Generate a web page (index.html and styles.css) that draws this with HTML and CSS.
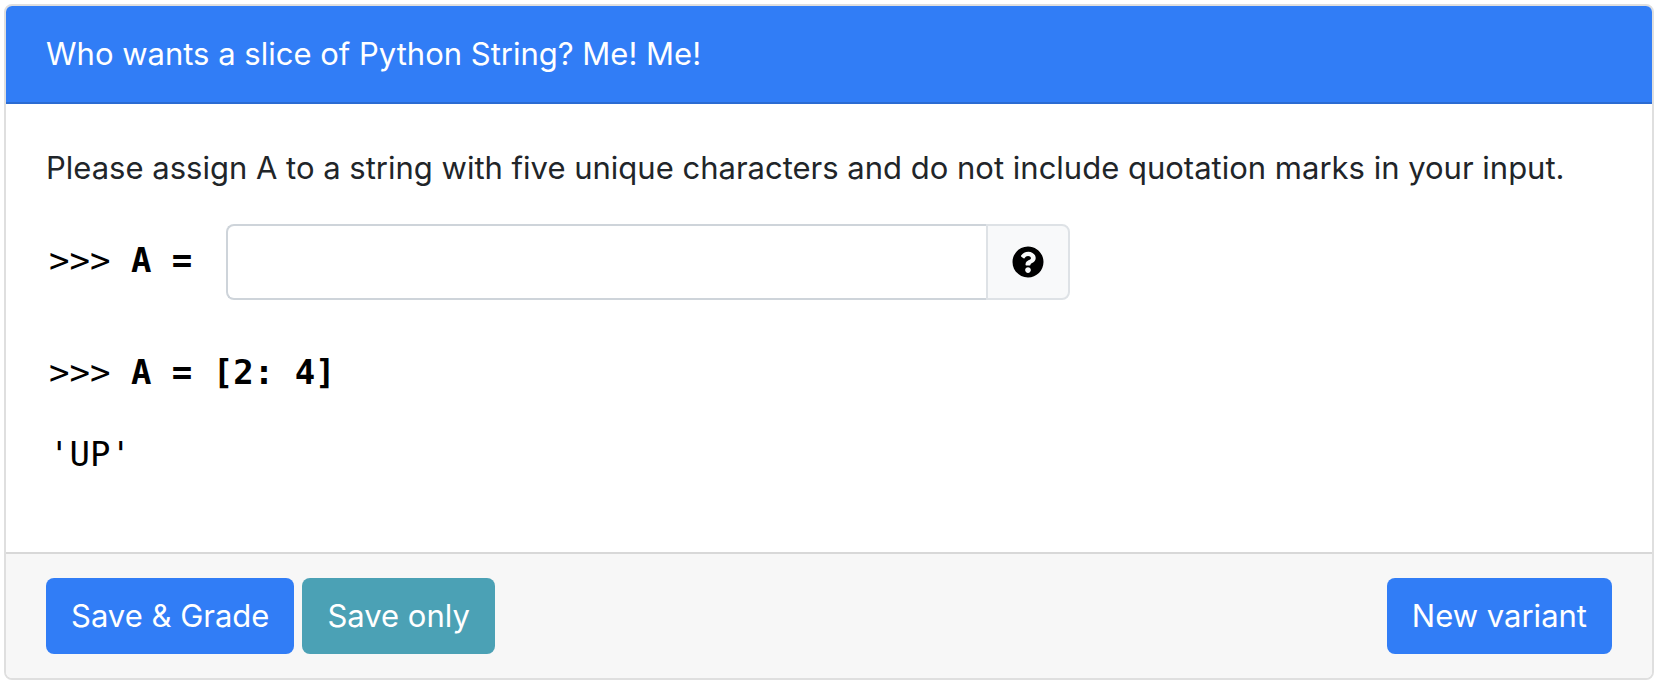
FILE: index.html
```html
<!DOCTYPE html>
<html lang="en">
<head>
<meta charset="utf-8">
<meta name="viewport" content="width=device-width, initial-scale=1">
<title>Who wants a slice of Python String?</title>
<link rel="stylesheet" href="styles.css">
</head>
<body>
<form class="card">
  <header class="card-header"><h1 class="title">Who wants a slice of Python String? Me! Me!</h1></header>
  <main class="card-body">
    <p class="prompt">Please assign A to a string with five unique characters and do not include quotation marks in your input.</p>
    <div class="answer">
      <label class="code answer-label" for="answer-a">&gt;&gt;&gt; <b>A =</b></label>
      <div class="input-group">
        <input class="input" id="answer-a" type="text" autocomplete="off">
        <button class="help" type="button" aria-label="Help">
          <svg class="help-icon" viewBox="0 0 512 512" aria-hidden="true"><path fill="currentColor" d="M504 256c0 136.997-111.043 248-248 248S8 392.997 8 256C8 119.083 119.043 8 256 8s248 111.083 248 248zM262.655 90c-54.497 0-89.255 22.957-116.549 63.758-3.536 5.286-2.353 12.415 2.715 16.258l34.699 26.31c5.205 3.947 12.621 3.008 16.665-2.122 17.864-22.658 30.113-35.797 57.303-35.797 20.429 0 45.698 13.148 45.698 32.958 0 14.976-12.363 22.667-32.534 33.976C247.128 238.528 216 254.941 216 296v4c0 6.627 5.373 12 12 12h56c6.627 0 12-5.373 12-12v-1.333c0-28.462 83.186-29.647 83.186-106.667 0-58.002-60.165-102-116.531-102zM256 338c-25.365 0-46 20.635-46 46 0 25.364 20.635 46 46 46s46-20.636 46-46c0-25.365-20.635-46-46-46z"/></svg>
        </button>
      </div>
    </div>
    <p class="code expression">&gt;&gt;&gt; <b>A = [2: 4]</b></p>
    <p class="code output">'UP'</p>
  </main>
  <footer class="card-footer">
    <button class="btn btn-primary" type="button">Save &amp; Grade</button>
    <button class="btn btn-info" type="button">Save only</button>
    <button class="btn btn-primary btn-end" type="button">New variant</button>
  </footer>
</form>
</body>
</html>
```
FILE: styles.css
```css
* {
  box-sizing: border-box;
}

body {
  margin: 0;
  padding: 4px;
  background: #fff;
  color: #212529;
  font-family: Inter, "Liberation Sans", sans-serif;
  font-size: 31px;
  line-height: 48px;
}

.card {
  margin-right: 2px;
  border: 2px solid #dfdfdf;
  border-radius: 8px;
  overflow: hidden;
}

.card-header {
  padding: 24px 40px;
  border-bottom: 2px solid #2b6bd2;
  background: #317df6;
  color: #fff;
}

.title {
  margin: 0;
  font-size: inherit;
  font-weight: 400;
}

.card-body {
  padding: 40px;
}

.prompt {
  margin: 0 0 32px;
}

.code {
  margin: 0;
  padding-left: 3px;
  color: #000;
  font-family: "DejaVu Sans Mono", monospace;
  font-size: 34px;
}

.answer {
  display: flex;
  align-items: center;
  gap: 34px;
  margin-bottom: 48px;
}

.answer-label {
  padding-bottom: 4px;
}

.input-group {
  display: flex;
  flex: 1;
  max-width: 844px;
}

.input {
  flex: 1;
  min-width: 0;
  height: 76px;
  padding: 12px 24px;
  border: 2px solid #ced4da;
  border-right: 0;
  border-radius: 8px 0 0 8px;
  background: #fff;
  font: inherit;
}

.help {
  display: flex;
  align-items: center;
  padding: 0 24px;
  border: 2px solid #dee2e6;
  border-radius: 0 8px 8px 0;
  background: #f8f9fa;
  color: #000;
}

.help-icon {
  width: 32px;
  height: 32px;
}

.expression {
  margin-bottom: 34px;
}

.output {
  margin-bottom: 34px;
}

.card-footer {
  display: flex;
  flex-wrap: wrap;
  gap: 8px;
  padding: 24px 40px;
  border-top: 2px solid #d8d8d8;
  background: #f7f7f7;
}

.btn {
  padding: 14px 25px;
  border: 0;
  border-radius: 8px;
  color: #fff;
  font: inherit;
}

.btn-primary {
  background: #317df6;
}

.btn-info {
  background: #4ba1b5;
}

.btn-end {
  margin-left: auto;
}
```
